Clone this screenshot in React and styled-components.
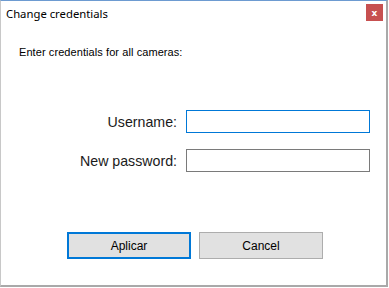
import React from "react";
import styled, { createGlobalStyle } from "styled-components";

const Global = createGlobalStyle`
  html, body { margin: 0; padding: 0; background: #ffffff; }
  body { width: 389px; height: 288px; overflow: hidden; }
`;

const Window = styled.div`
  box-sizing: border-box;
  width: 388px;
  height: 287px;
  background: #ffffff;
  border-top: 1px solid #6d9bd1;
  border-left: 1px solid #c8c8c8;
  border-right: 2px solid #a9a9a9;
  border-bottom: 2px solid #a9a9a9;
  display: flex;
  flex-direction: column;
  font-family: "Liberation Sans", Arial, sans-serif;
`;

const TitleBar = styled.div`
  height: 28px;
  display: flex;
  align-items: center;
  justify-content: space-between;
  padding: 0 2px 0 5px;
`;

const Title = styled.span`
  font-family: "Noto Sans", "Open Sans", sans-serif;
  font-size: 11.3px;
  color: #000;
  margin-top: -3px;
`;

const CloseBtn = styled.div`
  width: 17px;
  height: 17px;
  margin-top: -5px;
  margin-right: 1px;
  background: #c75050;
  color: #fff;
  font-family: "DejaVu Sans", sans-serif;
  font-weight: bold;
  font-size: 9px;
  display: flex;
  align-items: center;
  justify-content: center;
`;

const Body = styled.div`
  flex: 1;
  display: flex;
  flex-direction: column;
  padding: 17px 0 0 18px;
`;

const Intro = styled.div`
  font-size: 11px;
  letter-spacing: 0.08px;
  color: #000;
`;

const Form = styled.div`
  display: grid;
  grid-template-columns: 158px 184px;
  column-gap: 9px;
  row-gap: 16px;
  margin-top: 52px;
  align-items: center;
`;

const Label = styled.label`
  font-family: "Liberation Sans", Arial, sans-serif;
  font-size: 14.2px;
  color: #1a1a1a;
  text-align: right;
`;

const Input = styled.div`
  box-sizing: border-box;
  height: 23px;
  border: 1px solid ${(p) => (p.$focused ? "#0078d7" : "#7a7a7a")};
  background: #fff;
`;

const Buttons = styled.div`
  display: flex;
  gap: 8px;
  margin-top: 60px;
  margin-left: 48px;
`;

const Button = styled.div`
  box-sizing: border-box;
  width: 124px;
  height: 27px;
  background: #e1e1e1;
  border: ${(p) => (p.$primary ? "2px solid #0078d7" : "1px solid #adadad")};
  display: flex;
  align-items: center;
  justify-content: center;
  font-size: 12px;
  color: #000;
`;

export default function App() {
  return (
    <>
      <Global />
      <Window>
        <TitleBar>
          <Title>Change credentials</Title>
          <CloseBtn>x</CloseBtn>
        </TitleBar>
        <Body>
          <Intro>Enter credentials for all cameras:</Intro>
          <Form>
            <Label>Username:</Label>
            <Input $focused />
            <Label>New password:</Label>
            <Input />
          </Form>
          <Buttons>
            <Button $primary>Aplicar</Button>
            <Button>Cancel</Button>
          </Buttons>
        </Body>
      </Window>
    </>
  );
}
